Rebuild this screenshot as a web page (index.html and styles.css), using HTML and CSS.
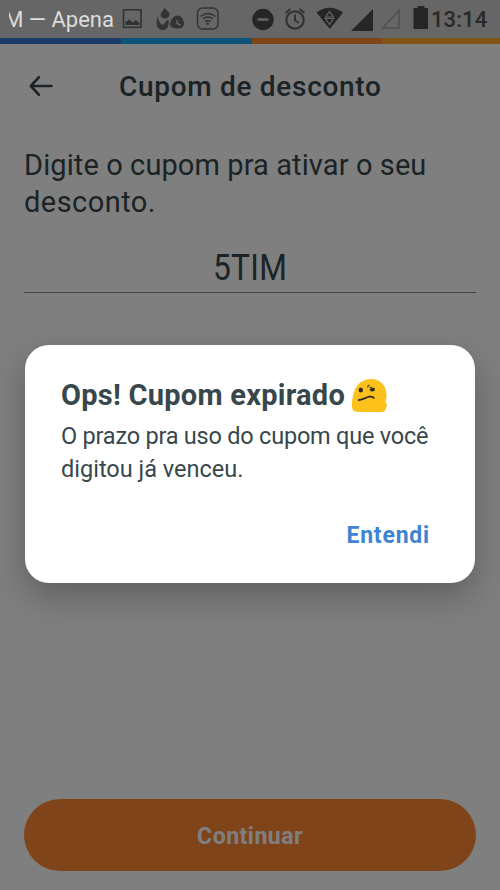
FILE: index.html
```html
<!DOCTYPE html>
<html lang="pt-BR">
<head>
<meta charset="utf-8">
<title>Cupom de desconto</title>
<link rel="stylesheet" href="styles.css">
</head>
<body>
<div class="screen">
  <div class="status">
    <div class="ticker"><span>M — Apena</span></div>
    <svg class="status-icons" width="310" height="38" viewBox="120 0 310 38">
      <g fill="none" stroke="#333" stroke-width="1.600">
        <rect x="123.500" y="9.800" width="17.500" height="17.500"/>
        <rect x="197.500" y="8" width="20.500" height="21" rx="5" stroke-width="1.400"/>
        <path d="M200.500 16.500q7.500-6 15 0M203 19q4.800-4 9.800 0M205.200 21.600q2.600-2 5.200 0" stroke-width="1.600"/>
        <circle cx="295" cy="20" r="8.700" stroke-width="2.200"/>
        <path d="M295 14.500v6l4 2.500M285.500 13l5-4M304.500 13l-5-4" stroke-width="2"/>
      </g>
      <g fill="#333">
        <path d="M125.500 25V22l3.500-2.500 4 3 2.500-2.500 4 3v2zM207.800 22.600l1.800 1.200-1.800 1.500-1.800-1.500z"/>
        <path d="M164.500 7c-1 4-3.800 5.500-3.800 8 0 2 1.700 3.500 3.800 3.500s5-1.500 5-4c0-3-4-4-5-7.500zM158 15.500c-2.500 7-2 14.500 5 14.500 4.500 0 6.500-5 5.500-10-2 0-3 2-4 3.500-1 1.500-2.500 1.800-3.500.5-1.500-2-3-4-3-8.500zM170 24c1-5 4-8.500 7.500-8.500 3.500 0 6.500 4 6.500 8.500 0 3.500-3.500 5-7.500 4.500s-7-1.500-6.500-4.500z"/>
      </g>
      <path d="M177 20v3.500l3.500 1.500" fill="none" stroke="#666" stroke-width="1.500"/>
      <g fill="#262626">
        <circle cx="263" cy="19.500" r="10.700"/>
        <path d="M316.500 12.500Q329.500 3 343 12.500L329.800 29z"/>
        <path d="M373 9v22h-22z"/>
        <path d="M413.500 8h4V6h7v2h3.500v21h-14.500z"/>
      </g>
      <path d="M257.500 19.500h11" stroke="#666" stroke-width="2.500"/>
      <path d="M329.500 11.500l4 5.500h-8zM325.500 18.500h8l-4 6z" fill="none" stroke="#666" stroke-width="1.200"/>
      <path d="M399 10.500v17.500h-16.500z" fill="none" stroke="#555" stroke-width="2"/>
    </svg>
    <span class="clock">13:14</span>
  </div>
  <div class="stripe"><i class="navy"></i><i class="blue"></i><i class="orange"></i><i class="amber"></i></div>
  <header class="header">
    <svg class="back" width="26" height="24" viewBox="0 0 26 24" fill="none" stroke="#37474c" stroke-width="2.600" stroke-linecap="round" stroke-linejoin="round"><path d="M23.500 12H2.800M11 3.200L2.800 12l8.200 8.800"/></svg>
    <h1>Cupom de desconto</h1>
  </header>
  <main class="content">
    <p class="lead"><span class="l1">Digite o cupom pra ativar o seu</span><br><span class="l2">desconto.</span></p>
    <div class="field"><span>5TIM</span></div>
  </main>
  <button class="submit"><span>Continuar</span></button>
</div>
<div class="overlay">
  <section class="dialog" role="dialog">
    <h2><span>Ops! Cupom expirado</span>
      <svg class="face" width="36" height="35" viewBox="0 0 36 35">
        <path d="M7 34C1.500 34 .5 30.500 1 25 2 10 8 1 20 1c10 0 15.500 7 15.500 16 0 3-.8 5.500-1 7.500 2 1.500 1.500 4 .5 5 .5 2.500-2 4.500-5 4.500z" fill="#fcc21b"/>
        <ellipse cx="9.800" cy="12" rx="2.200" ry="2.600" fill="#30282a"/>
        <ellipse cx="21.300" cy="11.700" rx="2.600" ry="1.800" fill="#30282a"/>
        <path d="M16.500 9.500q.2-2 2-2.500M18.500 9l5.500 2" fill="none" stroke="#4a3515" stroke-width="1.200"/>
        <path d="M7.500 22.200c4-.4 7-2.700 11-3.500 2-.3 3.500-.1 4.300 1.300" fill="none" stroke="#30282a" stroke-width="1.700" stroke-linecap="round"/>
      </svg>
    </h2>
    <p class="message"><span class="l1">O prazo pra uso do cupom que você</span><br><span class="l2">digitou já venceu.</span></p>
    <div class="actions"><button class="ok">Entendi</button></div>
  </section>
</div>
</body>
</html>
```
FILE: styles.css
```css
* { box-sizing: border-box; margin: 0; padding: 0; }
body { width: 500px; height: 890px; overflow: hidden; font-family: Roboto, "Liberation Sans", sans-serif; color: #37474c; background: #fff; }
button { border: 0; background: none; font: inherit; white-space: nowrap; }
.screen { height: 890px; display: flex; flex-direction: column; }
.status { position: relative; z-index: 2; height: 38px; background: #666; display: flex; align-items: center; }
.ticker { width: 105px; height: 38px; margin: 0 6px 0 9px; overflow: hidden; display: flex; justify-content: flex-end; color: #dcdcdc; font-size: 22px; line-height: 40px; white-space: nowrap; }
.status-icons { flex: none; }
.clock { font-size: 22px; font-weight: 500; line-height: 40px; color: #282828; margin: 1px 0 0 1px; letter-spacing: .1px; }
.stripe { height: 6px; display: flex; }
.navy { width: 121px; background: #3278d2; }
.blue { width: 131px; background: #1da8f2; }
.orange { width: 130px; background: #ff8833; }
.amber { flex: 1; background: #ffa92c; }
.header { height: 84px; display: flex; align-items: center; padding-left: 28px; }
.back { flex: none; margin-right: 65px; }
h1 { font-size: 28px; font-weight: 500; white-space: nowrap; letter-spacing: .7px; line-height: 36px; padding-top: 2px; }
.content { flex: 1; padding: 19px 24px 0; }
.lead { font-size: 29px; line-height: 37px; white-space: nowrap; }
.lead .l1 { letter-spacing: .1px; }
.lead .l2 { letter-spacing: .45px; }
.field { margin-top: 26px; height: 46px; border-bottom: 1px solid #858b8e; display: flex; justify-content: center; font-size: 36px; line-height: 42px; }
.field span { transform: scaleX(.88); letter-spacing: .3px; }
.submit { height: 72px; margin: 0 24px 19px; padding-top: 2px; border-radius: 36px; background: #ff8833; color: #fff; font-size: 23px; font-weight: 700; letter-spacing: .5px; }
.overlay { position: absolute; inset: 0; width: 500px; height: 890px; background: rgba(0, 0, 0, .5); display: flex; flex-direction: column; padding: 345px 25px 0; }
.dialog { height: 238px; border-radius: 24px; background: #fff; padding: 32px 45px 0 36px; box-shadow: 0 14px 34px rgba(0, 0, 0, .25); }
h2 { display: flex; align-items: center; gap: 6px; height: 36px; font-size: 29px; font-weight: 700; white-space: nowrap; letter-spacing: .25px; }
.message { margin-top: 7px; font-size: 23.500px; line-height: 33px; white-space: nowrap; }
.message .l1 { letter-spacing: -.22px; }
.actions { display: flex; justify-content: flex-end; margin-top: 35px; }
.ok { color: #4083d1; font-size: 23px; font-weight: 700; line-height: 30px; letter-spacing: .8px; }
```
